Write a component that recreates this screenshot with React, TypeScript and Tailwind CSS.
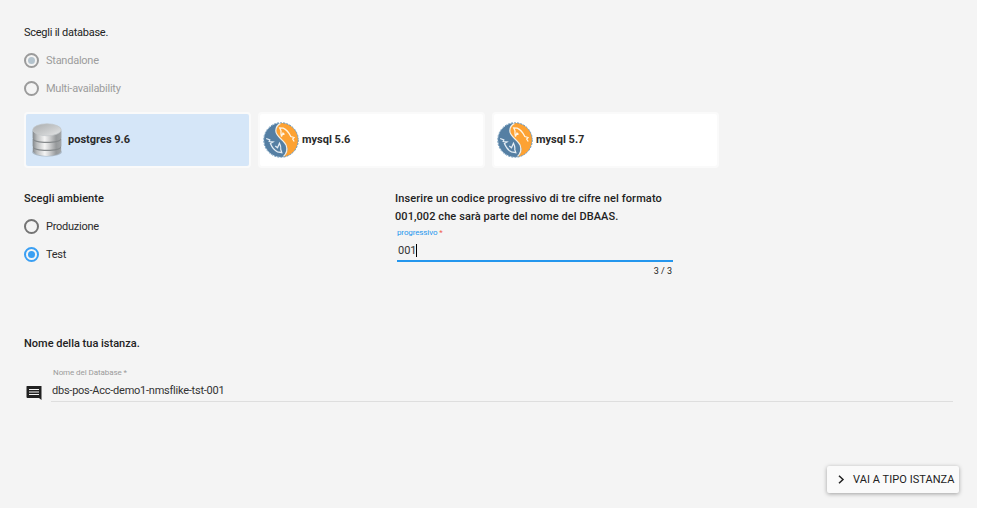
import React from "react";

type RadioProps = { label: string; checked?: boolean; disabled?: boolean };

function Radio({ label, checked, disabled }: RadioProps) {
  const ring = disabled ? "border-[#9b9b9b]" : checked ? "border-[#3a9ff3]" : "border-[#747474]";
  const dot = disabled ? "bg-[#b4c3cd]" : "bg-[#3a9ff3]";
  return (
    <label className="flex h-7 items-center">
      <span className={`flex size-[15px] shrink-0 items-center justify-center rounded-full border-2 ${ring}`}>
        {checked && <span className={`size-[7px] rounded-full ${dot}`} />}
      </span>
      <span className={`ml-[7px] pt-[2px] tracking-[-0.25px] ${disabled ? "text-[#9c9c9c]" : "text-[#2b2b2b]"}`}>{label}</span>
    </label>
  );
}

function DatabaseIcon() {
  return (
    <svg className="h-[34px] w-[30px] shrink-0" viewBox="0 0 30 34">
      <defs>
        <linearGradient id="side" x1="0" x2="1" y1="0" y2="0">
          <stop offset="0" stopColor="#85898c" />
          <stop offset="0.15" stopColor="#bcbebf" />
          <stop offset="0.42" stopColor="#f4f4f4" />
          <stop offset="0.58" stopColor="#d2d3d4" />
          <stop offset="0.82" stopColor="#96999b" />
          <stop offset="1" stopColor="#a2a5a7" />
        </linearGradient>
        <linearGradient id="top" x1="0" x2="1" y1="0" y2="1">
          <stop offset="0" stopColor="#a9acae" />
          <stop offset="0.6" stopColor="#cccecf" />
          <stop offset="1" stopColor="#e6e7e8" />
        </linearGradient>
      </defs>
      <ellipse cx="15" cy="29" rx="14.8" ry="4.6" fill="#aab8c5" />
      <path d="M.8 24.5v3.3c0 3 6.4 5.2 14.2 5.2s14.2-2.2 14.2-5.2v-3.3z" fill="url(#side)" />
      <path d="M.8 16v7.8c0 3 6.4 4.2 14.2 4.2s14.2-1.2 14.2-4.2V16z" fill="#85898b" />
      <path d="M.8 16v6.6c0 3 6.4 4.2 14.2 4.2s14.2-1.2 14.2-4.2V16z" fill="url(#side)" />
      <path d="M.8 8v7.8C.8 18.8 7.2 20 15 20s14.2-1.2 14.2-4.2V8z" fill="#85898b" />
      <path d="M.8 7v7.6c0 3 6.4 4.2 14.2 4.2s14.2-1.2 14.2-4.2V7z" fill="url(#side)" />
      <ellipse cx="15" cy="6.8" rx="14.2" ry="6" fill="url(#top)" stroke="#c2c6c9" strokeWidth=".7" />
    </svg>
  );
}

function MysqlIcon() {
  return (
    <svg className="size-[36px] shrink-0" viewBox="0 0 36 36" fill="none">
      <circle cx="18" cy="18" r="17" fill="#557fa3" />
      <path d="M18.5 1A17 17 0 0 1 24 33.9c-1 .6-2 .9-3 1 4-4 4.600-9 1.500-13.500C19.500 17.500 13 14 13 8.500 13 4.500 15.500 2 18.500 1z" fill="#fda233" />
      <path d="M17.500 1.400C14.500 3 12.800 5.400 12.800 8.800c0 6.200 8.200 8.700 10.400 14.600 1.500 4.200.3 8.200-2.700 11" stroke="#f4efe4" strokeWidth="1.200" />
      <circle cx="18" cy="18" r="17.300" stroke="#6f9abc" strokeWidth="1" strokeDasharray="2 1.200" />
      <path d="M18.500 14.500c-.5-2-.7-4-.5-5.700l-1.300-2.800 3.500.2c3.300 1.400 5.600 4.300 7.600 8.300l3.200 1-1.300 1.500 1.500 2.500M18.500 14.500l1.500-3.500 1.500 1.500" stroke="#fff5e5" strokeWidth="1.250" />
      <path d="M3.200 16.500l3.600 1.400-.6 1.600 3.800.5-2.600 1.500c1.500 3.600 4 7 7.100 8.300l4.300.8-1-3c.3-2.300-.3-4.500-1.300-6.400l-2 4.500-2.200-1.700" stroke="#e4edf4" strokeWidth="1.250" />
    </svg>
  );
}

function DbCard({ name, selected, children }: { name: string; selected?: boolean; children: React.ReactNode }) {
  return (
    <div className={`flex h-[56px] w-[227px] items-center rounded-[4px] border-2 border-[#fafafa] ${selected ? "bg-[#d5e6f8]" : "bg-white"}`}>
      <div className="flex w-[42px] items-center pl-[5px]">
        <div className={`-mr-1 flex ${selected ? "pl-px" : "-ml-[2px]"}`}>{children}</div>
      </div>
      <span className="font-bold text-[#2b2b2b]">{name}</span>
    </div>
  );
}

export default function App() {
  return (
    <div className="h-[508px] w-[983px] overflow-hidden bg-white font-[Roboto,sans-serif] text-[11px] leading-[18px] text-[#222]">
      <main className="flex h-full w-[977px] flex-col bg-[#f4f4f4] pl-6">
        <h2 className="mt-[24px] tracking-[-0.25px]">Scegli il database.</h2>
        <div className="mt-[4px]">
          <Radio label="Standalone" checked disabled />
          <Radio label="Multi-availability" disabled />
        </div>
        <div className="mt-[10px] flex gap-[7px]">
          <DbCard name="postgres 9.6" selected><DatabaseIcon /></DbCard>
          <DbCard name="mysql 5.6"><MysqlIcon /></DbCard>
          <DbCard name="mysql 5.7"><MysqlIcon /></DbCard>
        </div>

        <div className="mt-[22px] flex h-[145px]">
          <section className="w-[371px]">
            <h3 className="mb-[4px] font-medium tracking-[0.07px]">Scegli ambiente</h3>
            <Radio label="Produzione" />
            <Radio label="Test" checked />
          </section>
          <section className="w-[278px]">
            <p className="whitespace-nowrap font-medium tracking-[0.12px]">
              Inserire un codice progressivo di tre cifre nel formato
              <br />
              <span className="tracking-[0.08px]">001,002 che sarà parte del nome del DBAAS.</span>
            </p>
            <div className="ml-[2px] border-b-2 border-[#2496ed]">
              <div className="h-[11px] pt-px text-[8px] leading-[11px] tracking-[-0.12px] text-[#2496ed]">
                progressivo <span className="text-[#f0604d]">*</span>
              </div>
              <div className="flex h-[23px] items-center pt-[5px] pl-[1px]">
                <span className="text-[#333]">001</span>
                <span className="-ml-px mb-px h-[13px] w-px bg-black" />
              </div>
            </div>
            <div className="pr-px text-right text-[9px]">3 / 3</div>
          </section>
        </div>

        <h3 className="font-medium">Nome della tua istanza.</h3>
        <div className="mt-[14px] flex h-[35px]">
          <svg className="mt-[19px] ml-[2px] size-[16px] shrink-0" viewBox="0 0 16 16">
            <path d="M1 0h14.500v14l-2.500-2H1.500A1 1 0 0 1 .5 11V.5A.5.500 0 0 1 1 0z" fill="#212121" />
            <path d="M3 3.500h10M3 6h10M3 8.500h10" stroke="#f4f4f4" strokeWidth="1.200" />
          </svg>
          <div className="ml-[9px] w-[902px] border-b border-[#dedede]">
            <div className="h-[11px] pl-[2px] text-[8px] leading-[11px] tracking-[-0.08px] text-[#9b9b9b]">Nome del Database *</div>
            <div className="mt-[4px] pl-px tracking-[-0.24px] text-[#333]">dbs-pos-Acc-demo1-nmsflike-tst-001</div>
          </div>
        </div>

        <button className="mt-[64px] ml-[803px] flex h-[27px] w-[132px] shrink-0 items-center rounded-[2px] bg-[#fafafa] pl-[11px] whitespace-nowrap shadow-[0_1px_4px_rgba(0,0,0,0.35)]">
          <svg className="h-[9px] w-[7px]" viewBox="0 0 7 9" fill="none">
            <path d="M1 .7l4 3.800-4 3.800" stroke="#222" strokeWidth="1.500" />
          </svg>
          <span className="ml-[8px] tracking-[0.06px]">VAI A TIPO ISTANZA</span>
        </button>
      </main>
    </div>
  );
}
